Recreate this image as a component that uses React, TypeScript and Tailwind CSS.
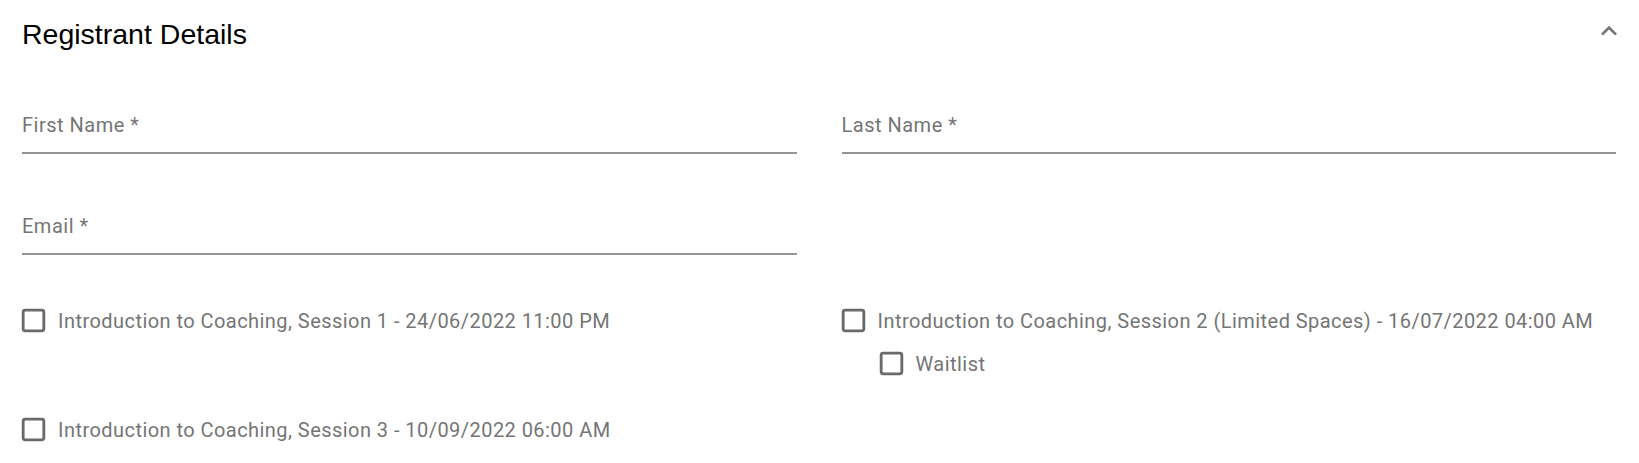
import React from 'react';

const sessionOne = 'Introduction to Coaching, Session 1 - 24/06/2022 11:00 PM';
const sessionTwo = 'Introduction to Coaching, Session 2 (Limited Spaces) - 16/07/2022 04:00 AM';
const sessionThree = 'Introduction to Coaching, Session 3 - 10/09/2022 06:00 AM';

function BoxIcon() {
  return (
    <svg viewBox="0 0 24 24" className="w-[31px] h-[31px] -ml-[4px] shrink-0">
      <rect x="4" y="4" width="16" height="16" rx="1.6" fill="none" stroke="#6a6a6a" strokeWidth="2.2" />
    </svg>
  );
}

function CheckItem({ label, className = '' }: { label: string; className?: string }) {
  return (
    <label className={`flex items-center gap-[9px] cursor-pointer ${className}`}>
      <BoxIcon />
      <span className="text-[20px] leading-[24px] tracking-[0.45px] text-[#757575] whitespace-nowrap">{label}</span>
    </label>
  );
}

function Field({ label }: { label: string }) {
  return (
    <div className="flex flex-col">
      <span className="text-[20px] leading-[24px] tracking-[0.5px] text-[#757575]">{label}</span>
      <div className="mt-[15px] h-[2px] bg-[#959595]" />
    </div>
  );
}

export default function App() {
  return (
    <div className="bg-white min-h-[463px] pl-[22px] pr-[23px] pt-[20px] font-['Roboto',sans-serif]">
      <div className="flex justify-between items-start">
        <h2 className="text-[28.5px] leading-[29px] font-normal text-black font-['Liberation_Sans',Arial,sans-serif]">
          Registrant Details
        </h2>
        <svg viewBox="0 0 24 24" className="w-[32px] h-[32px] -mt-[5px] -mr-[9px] fill-[#757575]">
          <path d="M12 8l-6 6 1.41 1.41L12 10.83l4.59 4.58L18 14z" />
        </svg>
      </div>

      <div className="grid grid-cols-2 gap-x-[45px] gap-y-[60px] mt-[64px]">
        <Field label="First Name *" />
        <Field label="Last Name *" />
        <Field label="Email *" />
        <div />
      </div>

      <div className="grid grid-cols-2 items-start gap-x-[45px] gap-y-[35px] mt-[50px]">
        <CheckItem label={sessionOne} />
        <div className="flex flex-col">
          <CheckItem label={sessionTwo} />
          <CheckItem label="Waitlist" className="ml-[38px] mt-[12px]" />
        </div>
        <CheckItem label={sessionThree} />
      </div>
    </div>
  );
}
